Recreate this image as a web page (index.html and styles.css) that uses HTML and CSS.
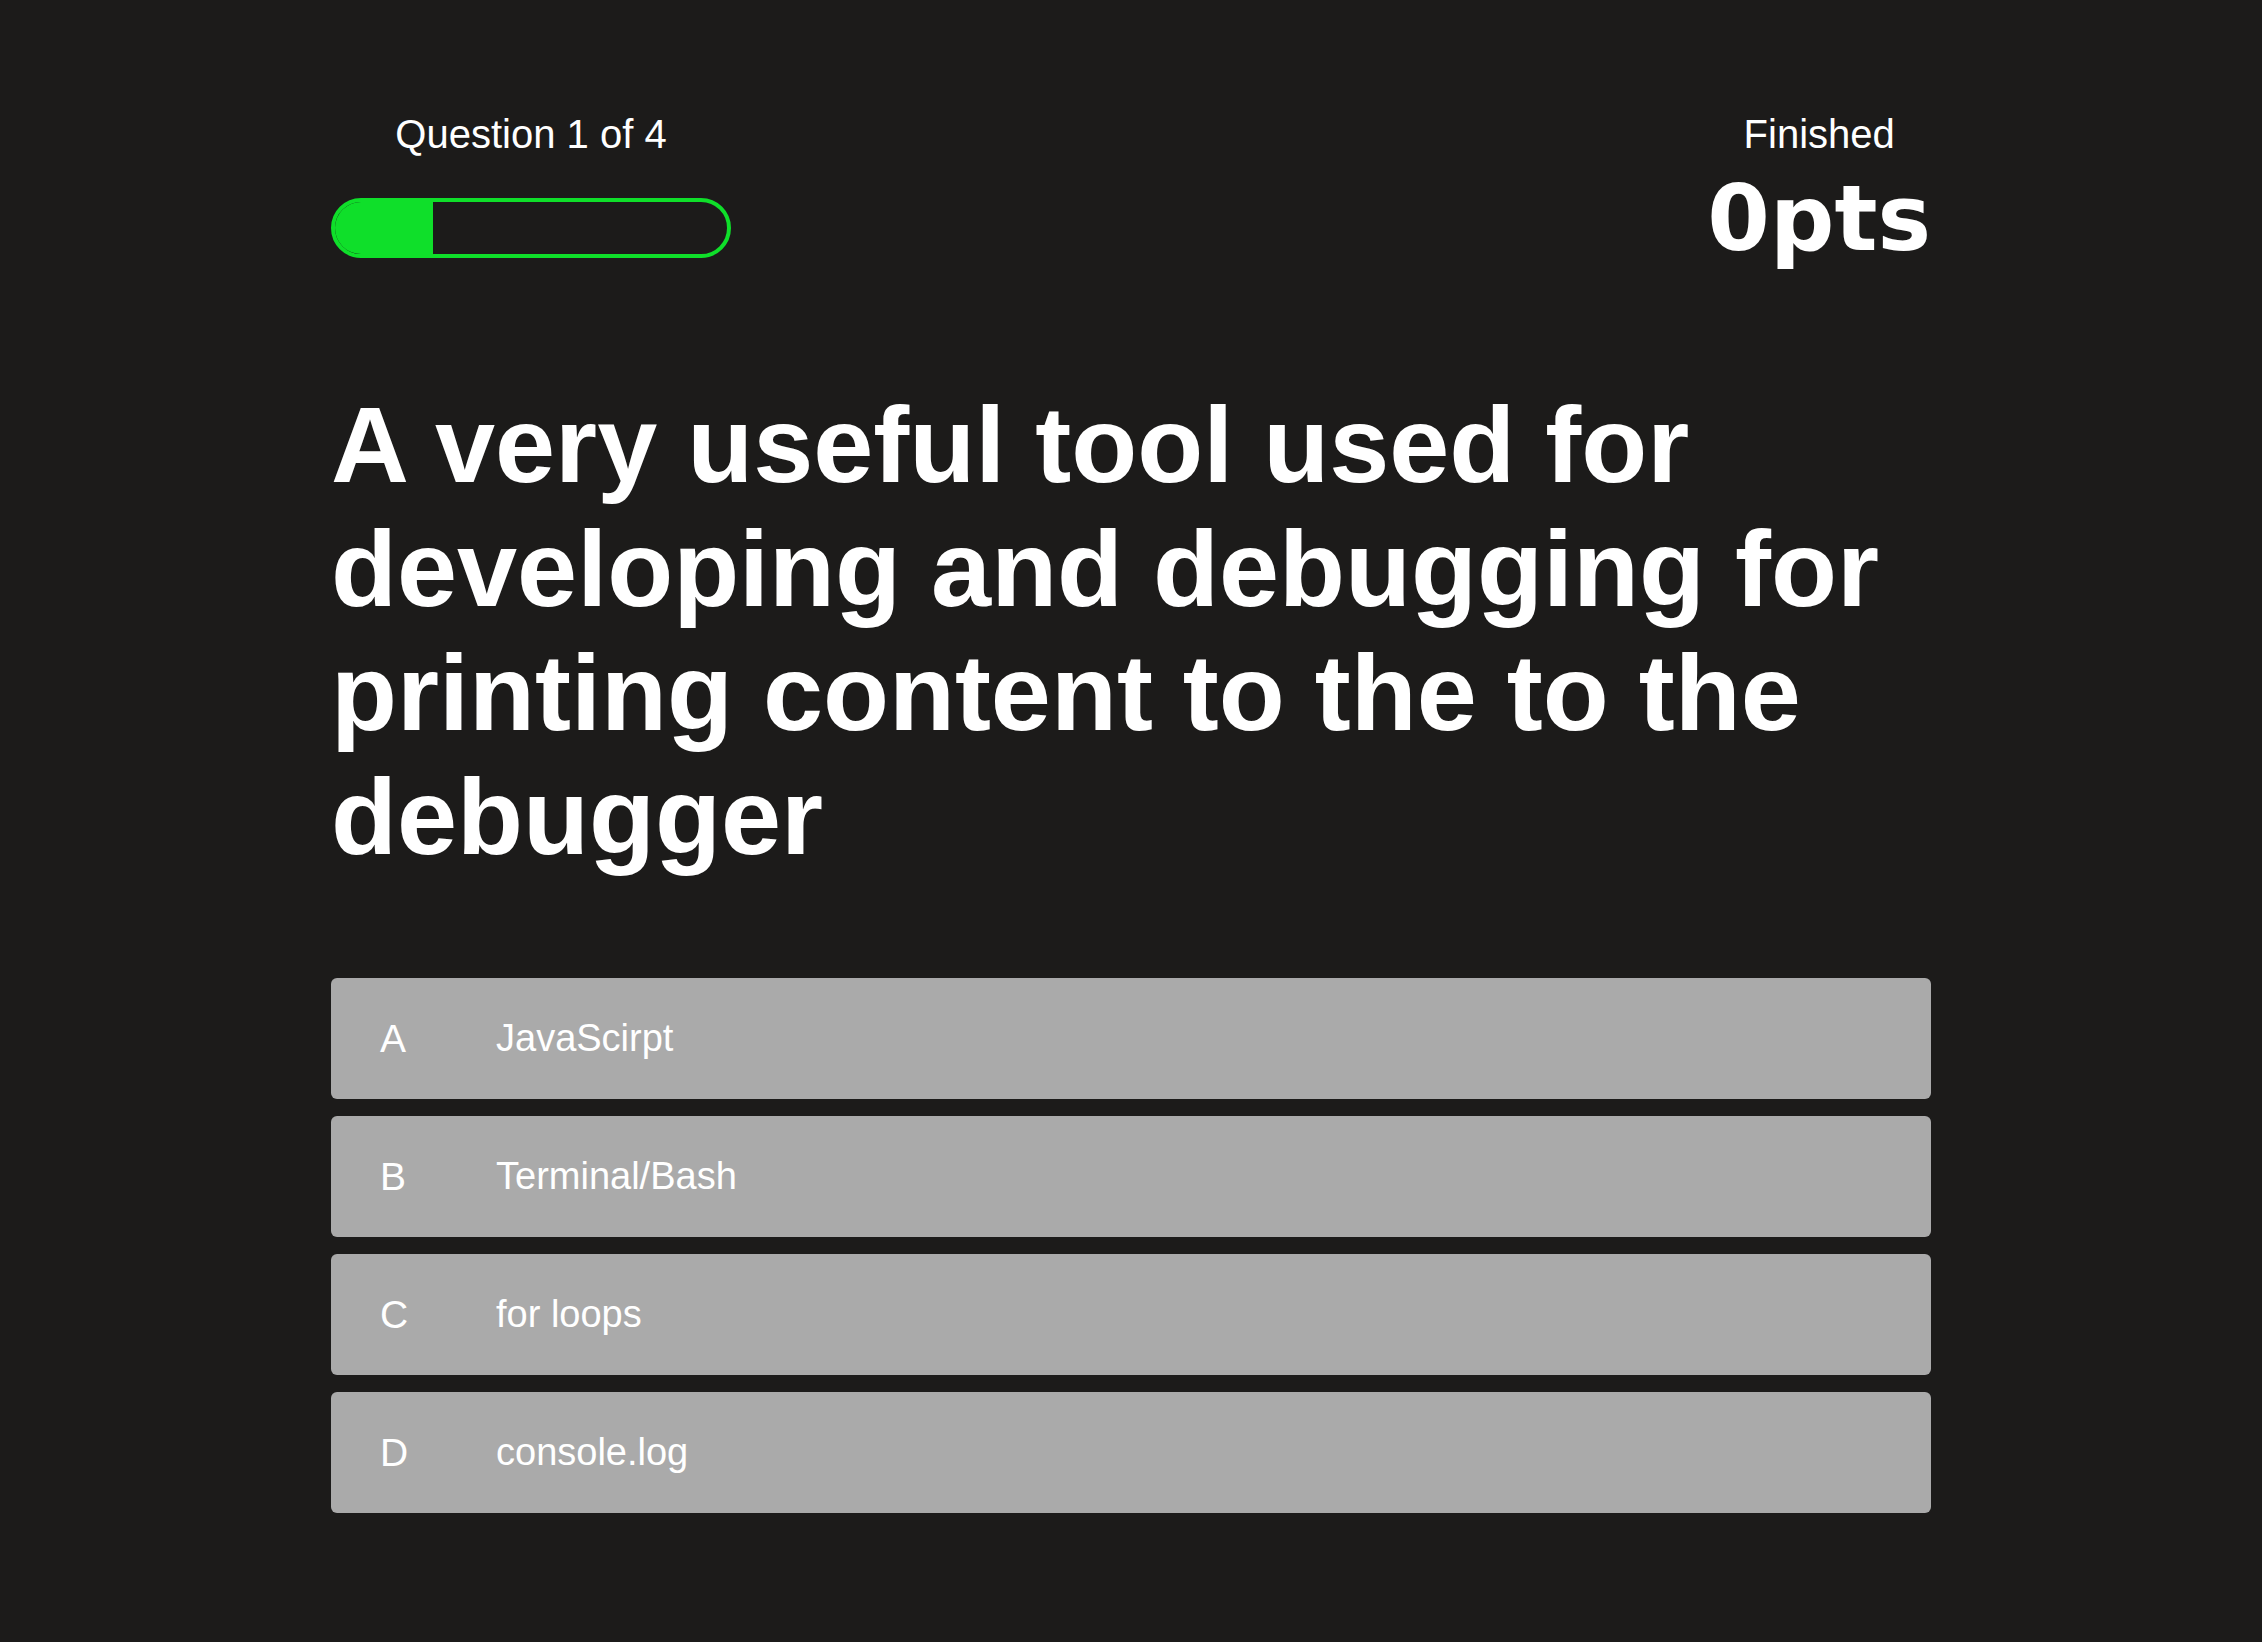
FILE: index.html
```html
<!DOCTYPE html>
<html lang="en">
<head>
<meta charset="utf-8">
<title>Quiz</title>
<link rel="stylesheet" href="styles.css">
</head>
<body>
<main class="quiz">
  <header class="quiz-header">
    <div class="progress-block">
      <div class="progress-label">Question 1 of 4</div>
      <div class="progress-bar"><div class="progress-fill" style="width: 25%"></div></div>
    </div>
    <div class="score-block">
      <div class="score-label">Finished</div>
      <div class="score-value">0pts</div>
    </div>
  </header>
  <h1 class="question">A very useful tool used for developing and debugging for printing content to the to the debugger</h1>
  <ul class="answers">
    <li class="answer"><span class="answer-letter">A</span><span class="answer-text">JavaScirpt</span></li>
    <li class="answer"><span class="answer-letter">B</span><span class="answer-text">Terminal/Bash</span></li>
    <li class="answer"><span class="answer-letter">C</span><span class="answer-text">for loops</span></li>
    <li class="answer"><span class="answer-letter">D</span><span class="answer-text">console.log</span></li>
  </ul>
</main>
</body>
</html>
```

FILE: styles.css
```css
html, body {
  margin: 0;
  padding: 0;
}

body {
  background: #1c1b1a;
  color: #ffffff;
  font-family: "Liberation Sans", Arial, Helvetica, sans-serif;
  min-height: 1642px;
}

.quiz {
  width: 1600px;
  margin: 0 auto;
  padding-top: 111px;
}

.quiz-header {
  display: flex;
  justify-content: space-between;
  align-items: flex-start;
}

.progress-block {
  width: 400px;
  display: flex;
  flex-direction: column;
}

.progress-label {
  font-size: 40px;
  line-height: 46px;
  text-align: center;
}

.progress-bar {
  margin-top: 41px;
  height: 60px;
  box-sizing: border-box;
  border: 4px solid #0fdf2a;
  border-radius: 30px;
  overflow: hidden;
}

.progress-fill {
  height: 100%;
  background: #0fdf2a;
}

.score-block {
  display: flex;
  flex-direction: column;
  align-items: center;
}

.score-label {
  font-size: 40px;
  line-height: 46px;
}

.score-value {
  margin-top: 17px;
  font-family: "DejaVu Sans", Verdana, sans-serif;
  font-weight: bold;
  font-size: 90px;
  line-height: 90px;
}

.question {
  margin: 119px 0 0;
  font-size: 108px;
  line-height: 124px;
  font-weight: bold;
}

.answers {
  list-style: none;
  margin: 99px 0 0;
  padding: 0;
  display: flex;
  flex-direction: column;
  gap: 17px;
}

.answer {
  height: 121px;
  box-sizing: border-box;
  padding: 0 49px;
  background: #aaaaaa;
  border-radius: 6px;
  display: flex;
  align-items: center;
  font-size: 38px;
  color: #ffffff;
}

.answer-letter {
  width: 116px;
  flex: none;
  font-size: 39px;
}
```
